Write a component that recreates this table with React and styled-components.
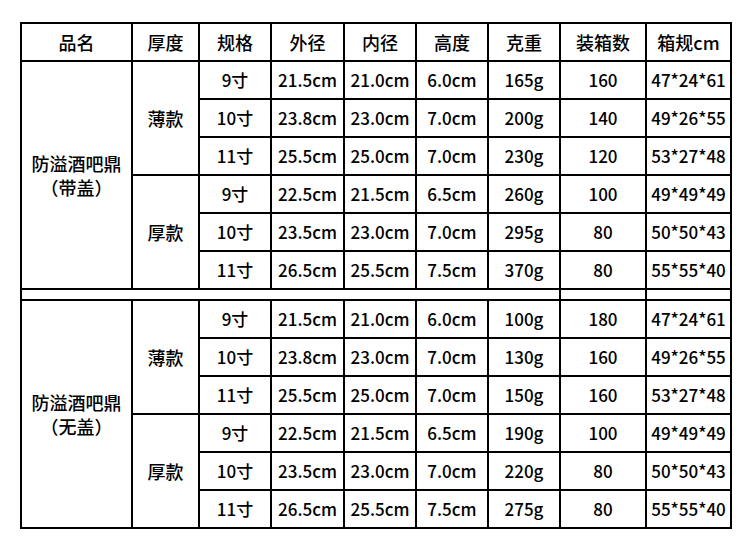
import styled, { createGlobalStyle } from "styled-components";

const GlobalStyle = createGlobalStyle`
  html, body {
    margin: 0;
    padding: 0;
    background: #fff;
  }
  body {
    font-family: "Noto Sans CJK SC", "Noto Sans", sans-serif;
    color: #000;
  }
`;

const Page = styled.div`
  padding: 22px 0 0 20px;
`;

const Table = styled.table`
  border-collapse: collapse;
  table-layout: fixed;
  width: 710px;
  border: 2px solid #000;
`;

const Row = styled.tr`
  height: ${(p) => (p.$spacer ? 9 : 38)}px;
`;

const Cell = styled.td`
  border: 2px solid #000;
  padding: 0;
  text-align: center;
  vertical-align: middle;
  font-size: ${(p) => (p.$head ? 18 : 17)}px;
  font-weight: 500;
  line-height: 1.35;
  white-space: nowrap;
`;

const Spacer = styled.td`
  border: 2px solid #000;
  padding: 0;
  height: 9px;
`;

const cols = [111, 67, 72, 73, 72, 72, 72, 86, 85];
const headers = ["品名", "厚度", "规格", "外径", "内径", "高度", "克重", "装箱数", "箱规cm"];

const groups = [
  {
    name: "带盖",
    thin: [
      ["9寸", "21.5cm", "21.0cm", "6.0cm", "165g", "160", "47*24*61"],
      ["10寸", "23.8cm", "23.0cm", "7.0cm", "200g", "140", "49*26*55"],
      ["11寸", "25.5cm", "25.0cm", "7.0cm", "230g", "120", "53*27*48"],
    ],
    thick: [
      ["9寸", "22.5cm", "21.5cm", "6.5cm", "260g", "100", "49*49*49"],
      ["10寸", "23.5cm", "23.0cm", "7.0cm", "295g", "80", "50*50*43"],
      ["11寸", "26.5cm", "25.5cm", "7.5cm", "370g", "80", "55*55*40"],
    ],
  },
  {
    name: "无盖",
    thin: [
      ["9寸", "21.5cm", "21.0cm", "6.0cm", "100g", "180", "47*24*61"],
      ["10寸", "23.8cm", "23.0cm", "7.0cm", "130g", "160", "49*26*55"],
      ["11寸", "25.5cm", "25.0cm", "7.0cm", "150g", "160", "53*27*48"],
    ],
    thick: [
      ["9寸", "22.5cm", "21.5cm", "6.5cm", "190g", "100", "49*49*49"],
      ["10寸", "23.5cm", "23.0cm", "7.0cm", "220g", "80", "50*50*43"],
      ["11寸", "26.5cm", "25.5cm", "7.5cm", "275g", "80", "55*55*40"],
    ],
  },
];

function GroupRows({ group }) {
  const rows = [];
  const kinds = [
    ["薄款", group.thin],
    ["厚款", group.thick],
  ];
  kinds.forEach(([kind, list], ki) => {
    list.forEach((r, i) => {
      rows.push(
        <Row key={kind + i}>
          {ki === 0 && i === 0 && (
            <Cell $head rowSpan={6}>
              防溢酒吧鼎
              <br />（{group.name}）
            </Cell>
          )}
          {i === 0 && (
            <Cell $head rowSpan={3}>
              {kind}
            </Cell>
          )}
          {r.map((v, j) => (
            <Cell key={j}>{v}</Cell>
          ))}
        </Row>
      );
    });
  });
  return rows;
}

export default function App() {
  return (
    <Page>
      <GlobalStyle />
      <Table>
        <colgroup>
          {cols.map((w, i) => (
            <col key={i} style={{ width: w }} />
          ))}
        </colgroup>
        <tbody>
          <Row>
            {headers.map((h) => (
              <Cell $head key={h}>
                {h}
              </Cell>
            ))}
          </Row>
          <GroupRows group={groups[0]} />
          <Row $spacer>
            <Spacer colSpan={7} />
            <Spacer />
            <Spacer />
          </Row>
          <GroupRows group={groups[1]} />
        </tbody>
      </Table>
    </Page>
  );
}
